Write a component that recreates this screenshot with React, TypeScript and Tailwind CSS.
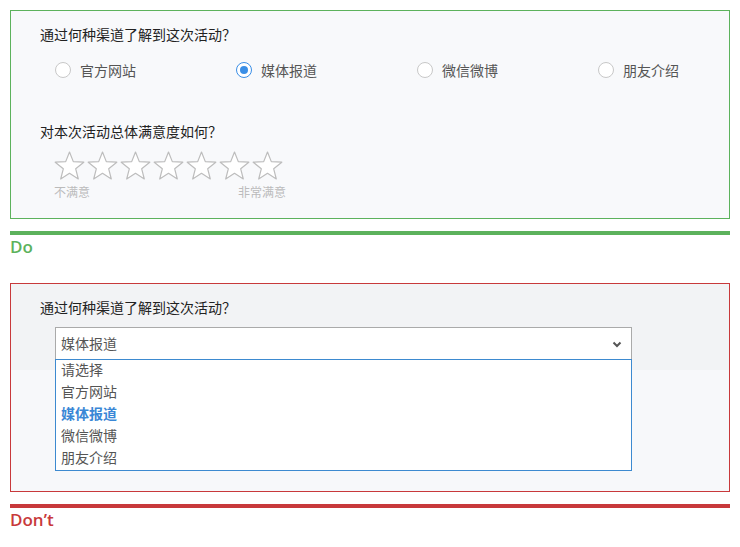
import React from "react";

const cjk = { fontFamily: '"Noto Sans CJK SC", "Noto Sans", sans-serif' };

function Radio({ checked, label }: { checked?: boolean; label: string }) {
  return (
    <div className="flex w-[181px] shrink-0 items-center">
      <span
        className={
          checked
            ? "flex h-[16px] w-[16px] items-center justify-center rounded-full border border-[#3a8ee6] bg-white"
            : "flex h-[16px] w-[16px] items-center justify-center rounded-full border border-[#c8c8c8] bg-white"
        }
      >
        {checked && <span className="h-[8px] w-[8px] rounded-full bg-[#3a8ee6]" />}
      </span>
      <span className="ml-[9px] text-[14px] leading-[20px] text-[#555]">{label}</span>
    </div>
  );
}

function Star() {
  return (
    <svg width="31" height="29" viewBox="0 0 31 29" className="shrink-0">
      <polygon
        points="15.5,1 19.3,10.6 29.8,11.2 21.7,17.8 24.3,28 15.5,22.3 6.7,28 9.3,17.8 1.2,11.2 11.7,10.6"
        fill="#fff"
        stroke="#bdbdbd"
        strokeWidth="1.2"
        strokeLinejoin="round"
      />
    </svg>
  );
}

export default function App() {
  const options = ["请选择", "官方网站", "媒体报道", "微信微博", "朋友介绍"];
  return (
    <div className="min-h-[547px] w-[740px] bg-white px-[10px] pt-[10px]" style={cjk}>
      {/* Do box */}
      <div className="h-[209px] overflow-hidden border border-[#5cb25c] bg-[#f8f9fb] pl-[29px] pt-[13px]">
        <div className="text-[14px] leading-[20px] text-[#222]">通过何种渠道了解到这次活动？</div>
        <div className="mt-[16px] flex pl-[15px]">
          <Radio label="官方网站" />
          <Radio checked label="媒体报道" />
          <Radio label="微信微博" />
          <Radio label="朋友介绍" />
        </div>
        <div className="mt-[41px] text-[14px] leading-[20px] text-[#222]">对本次活动总体满意度如何？</div>
        <div className="ml-[14px] mt-[10px] w-[232px]">
          <div className="flex gap-[2px]">
            {Array.from({ length: 7 }).map((_, i) => (
              <Star key={i} />
            ))}
          </div>
          <div className="mt-[4px] flex justify-between text-[12px] leading-[16px] text-[#bbb]">
            <span>不满意</span>
            <span>非常满意</span>
          </div>
        </div>
      </div>
      <div className="mt-[12px] h-[4px] bg-[#5cb25c]" />
      <div
        className="h-[24px] text-[17px] font-semibold leading-[24px] text-[#5cb25c]"
        style={{ fontFamily: '"Open Sans", "Noto Sans", sans-serif' }}
      >
        Do
      </div>

      {/* Don't box */}
      <div className="mt-[24px] flex h-[209px] flex-col border border-[#c8393b] bg-[#f7f8fa]">
        <div className="relative h-[86px] bg-[#f2f3f5] pl-[29px] pt-[13px]">
          <div className="text-[14px] leading-[20px] text-[#222]">通过何种渠道了解到这次活动？</div>
          <div className="relative ml-[15px] mt-[10px] w-[577px]">
            <div className="flex h-[33px] items-center justify-between border border-[#aaa] border-b-0 bg-white pb-[3px] pl-[5px] pr-[9px]">
              <span className="text-[14px] leading-[20px] text-[#555]">媒体报道</span>
              <svg width="10" height="7" viewBox="0 0 10 7" className="mt-[3px]">
                <polyline points="1.5,1.5 5,5 8.5,1.5" fill="none" stroke="#555" strokeWidth="2" />
              </svg>
            </div>
            <div className="absolute left-0 right-0 top-[32px] z-10 border border-[#3d8ad0] bg-white">
              {options.map((o) => (
                <div
                  key={o}
                  className={
                    o === "媒体报道"
                      ? "h-[22px] pl-[5px] text-[14px] font-bold leading-[18px] text-[#3a87d6]"
                      : "h-[22px] pl-[5px] text-[14px] leading-[18px] text-[#555]"
                  }
                >
                  {o}
                </div>
              ))}
            </div>
          </div>
        </div>
        <div className="flex-1" />
      </div>
      <div className="mt-[12px] h-[4px] bg-[#c8393b]" />
      <div
        className="h-[24px] text-[17px] font-semibold leading-[24px] text-[#c8393b]"
        style={{ fontFamily: '"Open Sans", "Noto Sans", sans-serif' }}
      >
        Don’t
      </div>
    </div>
  );
}
